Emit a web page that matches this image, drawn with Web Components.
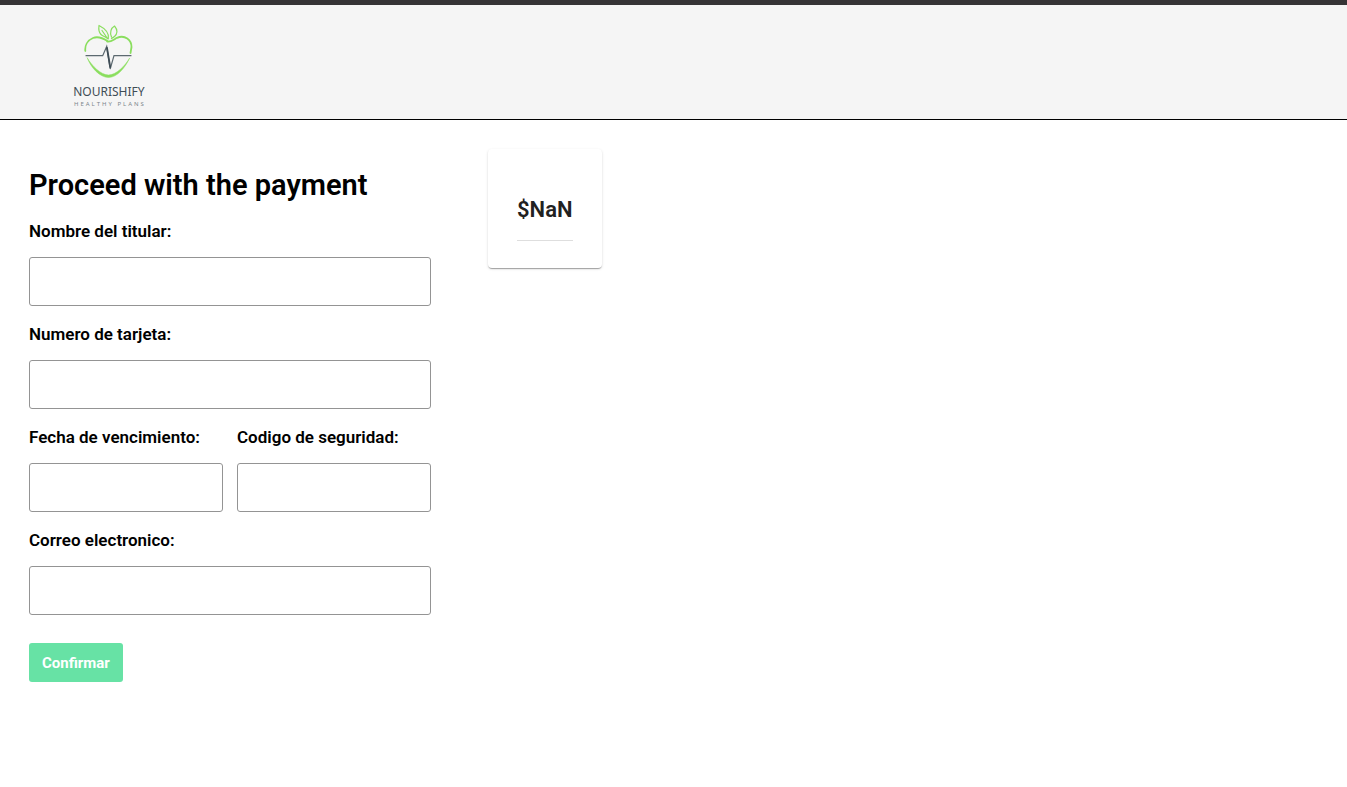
<!DOCTYPE html>
<html lang="es">
<head>
<meta charset="utf-8">
<meta name="viewport" content="width=device-width, initial-scale=1">
<title>Nourishify</title>
<style>
body { margin: 0; background: #fff; font-family: Roboto, "Liberation Sans", sans-serif; }
</style>
</head>
<body>
<payment-page></payment-page>
<script>
const define = (name, html) => {
  const template = document.createElement('template');
  template.innerHTML = html;
  customElements.define(name, class extends HTMLElement {
    constructor() {
      super();
      this.attachShadow({ mode: 'open' }).append(template.content.cloneNode(true));
    }
  });
};

define('brand-logo', `
<style>
:host { display: block; }
a { display: flex; flex-direction: column; align-items: center; color: #3f4d56; text-decoration: none; font-family: "Noto Sans", sans-serif; white-space: nowrap; }
svg { display: block; width: 50px; height: 56px; }
.name { font-size: 12px; line-height: 16px; margin-top: 4px; }
.tag { font-size: 6px; line-height: 8px; letter-spacing: 2px; padding-left: 2px; color: #7c868c; }
</style>
<a href="#">
<svg viewBox="0 0 50 56" fill="none" stroke="#8ade5e" stroke-linecap="round" stroke-linejoin="round" aria-hidden="true">
<path stroke-width="1.2" d="M24.300 15C25.500 9 22 5 15 1.500C14.500 5 14.500 8 17 10.500C19 12.500 21.500 12.500 23.500 14.500L18 6.500"/>
<path stroke-width="1.2" d="M27.500 13C25.500 8.500 27 4 30.500 2C34 6 33.500 10 30.500 12.500C29.500 13.300 28.500 14 27.500 14.500"/>
<path stroke-width="1.800" d="M23 17.500C26 18.500 29 16 33 13.800C41 10.500 47.500 16 47.500 23L46.500 29M23.500 17C18 13.500 14 12 9 14C3 16.500 .8 22 1.300 27"/>
<path fill="#8ade5e" stroke="#8ade5e" stroke-width=".5" d="M3.300 34C8 42 17 51 24.500 51C32 51 41 42 45.700 34C41 44 33 53.500 24.500 53.500C16 53.500 7 44 3.300 34Z"/>
<path stroke="#5c6970" stroke-width="1.200" stroke-linejoin="miter" d="M2 31.700H18.700L22.700 22.500L26.200 45L30 31.700H47"/>
<path stroke="#3f4d56" stroke-width="1.800" d="M23 24L26.200 43"/>
</svg>
<span class="name">NOURISHIFY</span>
<span class="tag">HEALTHY PLANS</span>
</a>`);

define('site-header', `
<style>
:host { display: block; }
header { box-sizing: border-box; border-top: 5px solid #363436; border-bottom: 1px solid #000; background: #f5f5f5; padding: 19px 72px 11px; display: flex; }
</style>
<header><slot></slot></header>`);

customElements.define('form-field', class extends HTMLElement {
  constructor() {
    super();
    this.attachShadow({ mode: 'open' }).innerHTML = `
<style>
:host { display: block; min-width: 0; }
label { display: block; font-size: 17px; font-weight: 600; line-height: 24px; color: #000; white-space: nowrap; }
input { display: block; box-sizing: border-box; width: 100%; height: 49px; margin-top: 14px; padding: 0 14px; border: 1px solid #949494; border-radius: 3px; background: #fff; font: inherit; font-size: 17px; }
</style>
<label for="control"></label><input id="control">`;
  }
  connectedCallback() {
    this.shadowRoot.querySelector('label').textContent = this.getAttribute('label');
    this.shadowRoot.querySelector('input').type = this.getAttribute('type') || 'text';
  }
});

define('action-button', `
<style>
:host { display: block; }
button { border: 0; border-radius: 3px; background: #67e2a5; color: #fff; font: inherit; font-size: 15px; font-weight: 700; line-height: 19px; padding: 11px 13px 9px; cursor: pointer; }
</style>
<button type="button"><slot></slot></button>`);

define('payment-form', `
<style>
:host { display: block; }
h1 { margin: 0 0 14px; font-size: 29px; line-height: 40px; font-weight: 600; color: #000; white-space: nowrap; }
form { display: grid; gap: 16px; }
.pair { display: grid; grid-template-columns: 1fr 1fr; gap: 14px; }
action-button { margin-top: 12px; }
</style>
<h1>Proceed with the payment</h1>
<form>
<form-field label="Nombre del titular:"></form-field>
<form-field label="Numero de tarjeta:"></form-field>
<div class="pair">
<form-field label="Fecha de vencimiento:"></form-field>
<form-field label="Codigo de seguridad:"></form-field>
</div>
<form-field label="Correo electronico:" type="email"></form-field>
<action-button>Confirmar</action-button>
</form>`);

define('price-card', `
<style>
:host { display: block; padding: 43px 29px 27px; border-radius: 4px; background: #fff; box-shadow: 0 2px 1px -1px rgba(0,0,0,.2), 0 1px 1px rgba(0,0,0,.14), 0 1px 3px rgba(0,0,0,.12); }
p { margin: 0; padding-bottom: 12px; border-bottom: 1px solid #dedede; font-size: 22px; line-height: 36px; font-weight: 600; color: #212121; }
</style>
<p><slot></slot></p>`);

define('payment-page', `
<style>
:host { display: block; }
main { display: flex; flex-wrap: wrap; align-items: flex-start; gap: 57px; padding: 29px; }
payment-form { flex: 0 1 402px; padding-top: 16px; }
</style>
<site-header><brand-logo></brand-logo></site-header>
<main>
<payment-form></payment-form>
<price-card>$NaN</price-card>
</main>`);
</script>
</body>
</html>
